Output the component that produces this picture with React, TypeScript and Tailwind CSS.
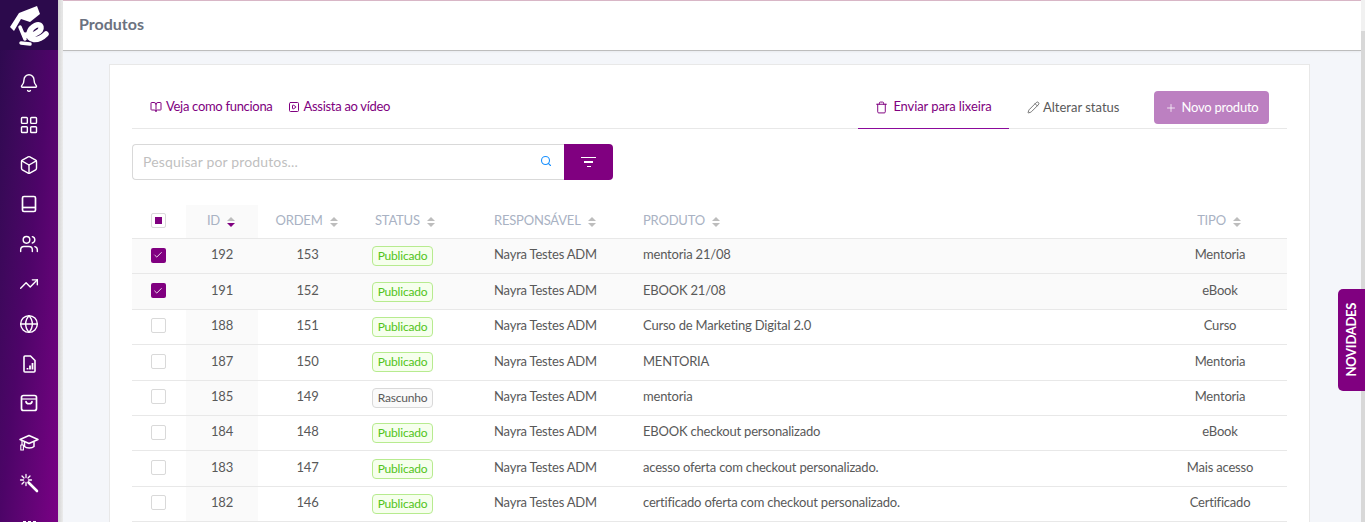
import { Bell, Box, LayoutGrid, Pencil, Plus, Search, Trash, TrendingUp, Users, Globe, BookOpen, SquarePlay, Check } from 'lucide-react'

const rows = [
  { id: 192, ordem: 153, status: 'Publicado', produto: 'mentoria 21/08', tipo: 'Mentoria', checked: true },
  { id: 191, ordem: 152, status: 'Publicado', produto: 'EBOOK 21/08', tipo: 'eBook', checked: true },
  { id: 188, ordem: 151, status: 'Publicado', produto: 'Curso de Marketing Digital 2.0', tipo: 'Curso', checked: false },
  { id: 187, ordem: 150, status: 'Publicado', produto: 'MENTORIA', tipo: 'Mentoria', checked: false },
  { id: 185, ordem: 149, status: 'Rascunho', produto: 'mentoria', tipo: 'Mentoria', checked: false },
  { id: 184, ordem: 148, status: 'Publicado', produto: 'EBOOK checkout personalizado', tipo: 'eBook', checked: false },
  { id: 183, ordem: 147, status: 'Publicado', produto: 'acesso oferta com checkout personalizado.', tipo: 'Mais acesso', checked: false },
  { id: 182, ordem: 146, status: 'Publicado', produto: 'certificado oferta com checkout personalizado.', tipo: 'Certificado', checked: false },
]

const gridCols = 'grid grid-cols-[54px_72px_99px_122px_149px_525px_134px]'

function Logo() {
  return (
    <svg width="58" height="50" viewBox="0 0 58 50" fill="none">
      <path d="M37 6 L19 13 L10 27 L14 31 L21 19 L30 22 L40 14 Z" fill="#fff" />
      <path d="M20 27 L25 39" stroke="#fff" strokeWidth="3.5" strokeLinecap="round" />
      <path
        d="M25 35 C31 37 42 32 41 27 C40 22 31 26 29 33 C27 41 38 42 46 34"
        stroke="#fff"
        strokeWidth="5.5"
        strokeLinecap="round"
      />
      <path d="M21 43 L30 44" stroke="#fff" strokeWidth="3.5" strokeLinecap="round" />
    </svg>
  )
}

function BookIcon() {
  return (
    <svg width="20" height="20" viewBox="0 0 20 20" fill="none" stroke="#fff" strokeWidth="1.7">
      <rect x="3.5" y="2.5" width="13" height="15" rx="1.5" />
      <path d="M3.5 13.5H16.5" />
    </svg>
  )
}

function FileIcon() {
  return (
    <svg width="20" height="20" viewBox="0 0 20 20" fill="none" stroke="#fff" strokeWidth="1.6">
      <path d="M6 2H11.5L16 6.5V17C16 17.6 15.6 18 15 18H6C5.4 18 5 17.6 5 17V3C5 2.4 5.4 2 6 2Z" />
      <path d="M8.5 15.5V14M11 15.5V11.5M13.5 15.5V9" strokeWidth="1.8" />
    </svg>
  )
}

function BagIcon() {
  return (
    <svg width="20" height="20" viewBox="0 0 20 20" fill="none" stroke="#fff" strokeWidth="1.7">
      <rect x="2.5" y="2.5" width="15" height="15" rx="2" />
      <path d="M2.5 6H17.5" strokeWidth="1.2" />
      <path d="M7 8.5C7 11.5 13 11.5 13 8.5" strokeLinecap="round" />
    </svg>
  )
}

function CapIcon() {
  return (
    <svg width="20" height="20" viewBox="0 0 20 20" fill="none" stroke="#fff" strokeWidth="1.5" strokeLinejoin="round">
      <path d="M10 2.5L19 6.5L10 10.5L1 6.5Z" />
      <path d="M5.5 9V13.5C7.5 15.5 13 15.5 15 13.5V9" />
      <path d="M3 7.5V12" strokeWidth="1.2" />
      <rect x="1.8" y="12" width="2.6" height="5" strokeWidth="1.1" />
    </svg>
  )
}

function WandIcon() {
  return (
    <svg width="20" height="20" viewBox="0 0 20 20" fill="none" stroke="#fff" strokeLinecap="round">
      <path d="M9.5 9.5 L18 18" strokeWidth="2.6" />
      <path d="M7 1.5V4.5M7 9.5V12.5M1.5 7H4.5M9.5 7H12.5M3 3L5 5M11 3L9 5M3 11L5 9" strokeWidth="1.3" />
    </svg>
  )
}

function Sidebar() {
  const iconClass = 'h-[20px] w-[20px] text-white'
  return (
    <aside className="flex h-full w-[58px] shrink-0 flex-col items-center overflow-hidden bg-gradient-to-br from-[#2b0a4d] via-[#4d0468] to-[#7a0085]">
      <div className="h-[50px] w-full bg-[#2c0a4c]">
        <Logo />
      </div>
      <nav className="flex flex-col items-center gap-[19.8px] pt-[23px]">
        <Bell className={iconClass} strokeWidth={1.7} />
        <LayoutGrid className={iconClass + ' mt-[2px]'} strokeWidth={1.7} />
        <Box className={iconClass} strokeWidth={1.7} />
        <BookIcon />
        <Users className={iconClass} strokeWidth={1.7} />
        <TrendingUp className={iconClass} strokeWidth={1.7} />
        <Globe className={iconClass} strokeWidth={1.7} />
        <FileIcon />
        <BagIcon />
        <CapIcon />
        <WandIcon />
        <div className="mt-[8px] flex gap-[2px]">
          <span className="h-[3px] w-[3px] bg-white" />
          <span className="h-[3px] w-[3px] bg-white" />
          <span className="h-[3px] w-[3px] bg-white" />
        </div>
      </nav>
    </aside>
  )
}

function SortArrows({ active }: { active?: boolean }) {
  return (
    <span className="ml-[7px] inline-flex flex-col gap-[2px]">
      <span className="h-0 w-0 border-x-[4px] border-b-[4px] border-x-transparent border-b-[#bdbdbd]" />
      <span className={'h-0 w-0 border-x-[4px] border-t-[4px] border-x-transparent ' + (active ? 'border-t-[#800080]' : 'border-t-[#bdbdbd]')} />
    </span>
  )
}

function Th({ label, active, className }: { label: string; active?: boolean; className?: string }) {
  return (
    <div className={'flex items-center text-[13px] tracking-[-0.2px] text-[#a9b2c3] ' + (className ?? '')}>
      <span className="pb-[2px]">{label}</span>
      <SortArrows active={active} />
    </div>
  )
}

function Checkbox({ checked }: { checked: boolean }) {
  if (checked) {
    return (
      <span className="flex h-[15px] w-[15px] items-center justify-center rounded-[2px] bg-[#800080]">
        <Check className="h-[10px] w-[10px] text-white" strokeWidth={2} />
      </span>
    )
  }
  return <span className="h-[15px] w-[15px] rounded-[2px] border border-[#d9d9d9] bg-white" />
}

function StatusBadge({ status }: { status: string }) {
  const pub = status === 'Publicado'
  return (
    <span
      className={
        'flex h-[20px] w-[61px] items-center justify-center rounded-[4px] border text-[12px] tracking-[-0.2px] ' +
        (pub ? 'border-[#b7eb8f] bg-[#f6ffed] text-[#52c41a]' : 'border-[#d9d9d9] bg-[#fafafa] text-[#595959]')
      }
    >
      {status}
    </span>
  )
}

function ProductTable() {
  return (
    <div className="mt-[25px]">
      <div className={gridCols + ' h-[34px] border-b border-[#e8e8e8]'}>
        <div className="flex items-center justify-center pb-[3px] pr-[2px]">
          <span className="flex h-[15px] w-[15px] items-center justify-center rounded-[2px] border border-[#d9d9d9] bg-white">
            <span className="h-[7px] w-[7px] bg-[#800080]" />
          </span>
        </div>
        <Th label="ID" active className="justify-center bg-[#fafafa] pr-[2px]" />
        <Th label="ORDEM" className="justify-center pr-[2px]" />
        <Th label="STATUS" className="pl-[18px]" />
        <Th label="RESPONSÁVEL" className="pl-[15px]" />
        <Th label="PRODUTO" className="pl-[15px]" />
        <Th label="TIPO" className="justify-center pr-[2px]" />
      </div>
      {rows.map((r) => (
        <div key={r.id} className={gridCols + ' h-[35.4px] border-b border-[#e8e8e8] text-[13px] tracking-[-0.2px] text-[#595959] ' + (r.checked ? 'bg-[#fafafa]' : 'bg-white')}>
          <div className="flex items-center justify-center pb-[2px] pr-[2px]">
            <Checkbox checked={r.checked} />
          </div>
          <div className="flex items-center justify-center bg-[#fafafa] pb-[2px]">{r.id}</div>
          <div className="flex items-center justify-center pb-[2px]">{r.ordem}</div>
          <div className="flex items-center pl-[15px]">
            <StatusBadge status={r.status} />
          </div>
          <div className="flex items-center pb-[2px] pl-[15px]">Nayra Testes ADM</div>
          <div className="flex items-center pb-[2px] pl-[15px]">{r.produto}</div>
          <div className="flex items-center justify-center pb-[2px]">{r.tipo}</div>
        </div>
      ))}
    </div>
  )
}

function Toolbar() {
  return (
    <div className="flex h-[44px] items-start justify-between border-b border-[#e8e8e8]">
      <div className="flex h-[43px] items-center gap-[15px] text-[13px] tracking-[-0.3px] text-[#800080]">
        <a className="flex items-center gap-[4px] pl-[18px]">
          <BookOpen className="h-[12px] w-[12px]" strokeWidth={2} />
          Veja como funciona
        </a>
        <a className="flex items-center gap-[4px]">
          <SquarePlay className="h-[12px] w-[12px]" strokeWidth={2} />
          Assista ao vídeo
        </a>
      </div>
      <div className="flex h-[44px] items-center">
        <div className="flex h-full w-[151px] items-center justify-center gap-[5px] border-b border-[#8b0a9b] pt-[1px] text-[13px] tracking-[-0.1px] text-[#800080]">
          <Trash className="h-[13px] w-[13px]" strokeWidth={1.8} />
          Enviar para lixeira
        </div>
        <div className="flex h-full w-[145px] items-center gap-[3px] pl-[18px] pt-[1px] text-[13px] text-[#595959]">
          <Pencil className="h-[13px] w-[13px]" strokeWidth={1.5} />
          Alterar status
        </div>
        <button className="mr-[18px] mt-[1px] flex h-[33px] w-[115px] items-center justify-center gap-[5px] rounded-[4px] bg-[#bc80c1] text-[13px] tracking-[-0.25px] text-white">
          <Plus className="h-[12px] w-[12px]" strokeWidth={1.5} />
          Novo produto
        </button>
      </div>
    </div>
  )
}

function SearchRow() {
  return (
    <div className="mt-[15px] flex h-[36px]">
      <div className="flex w-[432px] items-center justify-between rounded-l-[4px] border border-r-0 border-[#d9d9d9] bg-white pb-[2px] pl-[10px] pr-[12px]">
        <span className="text-[14px] tracking-[0.15px] text-[#bfbfbf]">Pesquisar por produtos...</span>
        <Search className="h-[12px] w-[12px] text-[#1890ff]" strokeWidth={2.2} />
      </div>
      <button className="flex w-[49px] flex-col items-center justify-center gap-[3px] rounded-r-[4px] bg-[#800080]">
        <span className="h-[1.5px] w-[15px] bg-white" />
        <span className="h-[1.5px] w-[9px] bg-white" />
        <span className="h-[1.5px] w-[4px] bg-white" />
      </button>
    </div>
  )
}

export default function App() {
  return (
    <div className="relative flex h-[522px] w-[1365px] overflow-hidden bg-[#f4f6fa] font-['Lato','Liberation_Sans',sans-serif]">
      <Sidebar />
      <div className="h-full w-[5px] shrink-0 bg-gradient-to-r from-[#d2d2d2] to-[#ececec]" />
      <main className="flex h-full min-w-0 flex-1 flex-col">
        <header className="flex h-[51px] shrink-0 items-center border-b border-t border-b-[#bdbdbd] border-t-[#d8b6c6] bg-white pb-[4px] pl-[16px] shadow-[0_1px_2px_rgba(0,0,0,0.05)]">
          <h1 className="text-[16px] font-bold text-[#6b7280]">Produtos</h1>
        </header>
        <section className="ml-[46px] mr-[51px] mt-[13px] flex-1 border border-[#e8e8e8] bg-white px-[22px] pt-[20px]">
          <Toolbar />
          <SearchRow />
          <ProductTable />
        </section>
      </main>
      <div className="flex h-full w-[4px] shrink-0 flex-col bg-[#f1f1f1] pt-[31px]">
        <div className="flex-1 bg-[#d8d8d8]" />
      </div>
      <div className="absolute right-0 top-[289px] flex h-[102px] w-[27px] items-center justify-center rounded-l-[5px] bg-[#800080]">
        <span className="-rotate-90 whitespace-nowrap text-[13px] font-bold tracking-[-0.3px] text-white">NOVIDADES</span>
      </div>
    </div>
  )
}
